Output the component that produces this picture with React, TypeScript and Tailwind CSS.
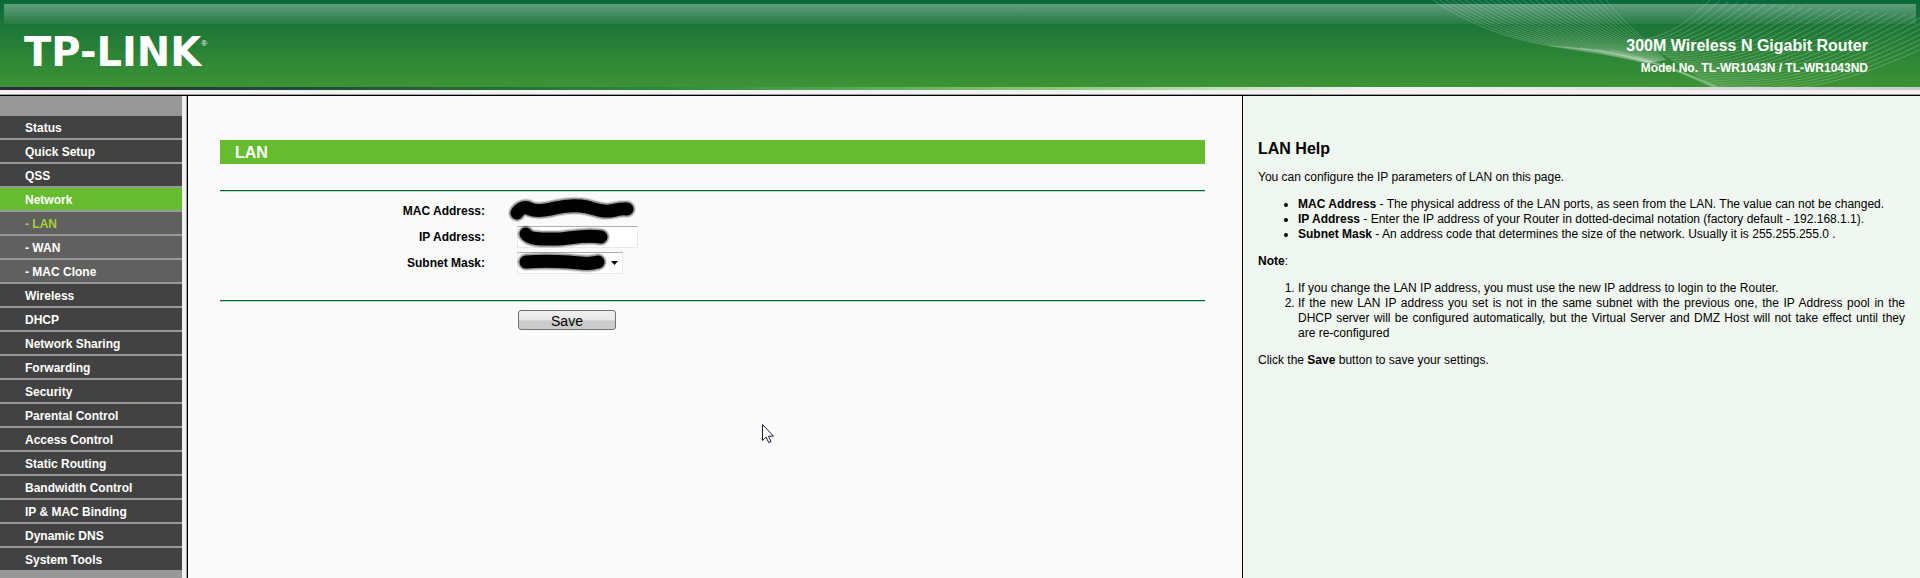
import React from "react";

interface MenuItem {
  label: string;
  sub?: boolean;
  open?: boolean;
  active?: boolean;
}

const menu: MenuItem[] = [
  { label: "Status" },
  { label: "Quick Setup" },
  { label: "QSS" },
  { label: "Network", open: true },
  { label: "- LAN", sub: true, active: true },
  { label: "- WAN", sub: true },
  { label: "- MAC Clone", sub: true },
  { label: "Wireless" },
  { label: "DHCP" },
  { label: "Network Sharing" },
  { label: "Forwarding" },
  { label: "Security" },
  { label: "Parental Control" },
  { label: "Access Control" },
  { label: "Static Routing" },
  { label: "Bandwidth Control" },
  { label: "IP & MAC Binding" },
  { label: "Dynamic DNS" },
  { label: "System Tools" },
];

const getItemStyle = (item: MenuItem) => {
  if (item.open) return "bg-[#66bb2f] text-white";
  if (item.active) return "bg-[#606060] text-[#a5d12f]";
  if (item.sub) return "bg-[#606060] text-white";
  return "bg-[#424242] text-white";
};

// evenly spread strands between two guide curves
const strands = (from: number[], to: number[], count: number) =>
  Array.from({ length: count }, (_, i) => {
    const t = i / (count - 1);
    const p = from.map((v, k) => Math.round((v + (to[k] - v) * t) * 10) / 10);
    return `M${p[0]} ${p[1]}C${p[2]} ${p[3]} ${p[4]} ${p[5]} ${p[6]} ${p[7]}`;
  });

const leftMesh = strands(
  [33, 0, 110, 52, 170, 44, 246, 63],
  [206, 0, 222, 20, 240, 36, 266, 60],
  28
);
const rightMesh = strands(
  [310, 0, 290, 20, 270, 36, 240, 40],
  [580, 20, 480, 72, 410, 100, 314, 87],
  30
);
const tail = strands(
  [150, 46, 220, 52, 262, 62, 314, 88],
  [210, 50, 250, 58, 285, 72, 320, 88],
  5
);

const Waves = () => (
  <svg
    className="absolute right-0 top-0 h-[87px] w-[520px]"
    viewBox="0 0 520 87"
    fill="none"
    stroke="#ffffff"
    strokeWidth="0.9"
    aria-hidden="true"
  >
    {[...leftMesh, ...rightMesh, ...tail].map((d) => (
      <path key={d} d={d} strokeOpacity="0.24" />
    ))}
  </svg>
);

const Header = () => (
  <header className="relative h-[87px] bg-linear-to-b from-[#08693a] via-[#217a37] via-40% to-[#3d9435]">
    <div className="absolute inset-x-1 top-1 h-5 bg-linear-to-b from-white/35 to-white/5" />
    <Waves />
    <div className="relative flex items-start justify-between pl-6 pr-[52px] text-white">
      <div className="flex pt-8">
        <span className="font-['DejaVu_Sans',sans-serif] text-[40px] leading-10 font-bold">
          TP-LINK
        </span>
        <span className="pt-2 text-[8px] leading-2">®</span>
      </div>
      <div className="pt-[34px] text-right font-bold">
        <h1 className="text-base leading-6">300M Wireless N Gigabit Router</h1>
        <p className="text-xs leading-5">Model No. TL-WR1043N / TL-WR1043ND</p>
      </div>
    </div>
  </header>
);

const Sidebar = () => (
  <nav className="w-[182px] shrink-0 bg-[#989898] pt-5">
    <ul className="flex flex-col gap-0.5">
      {menu.map((item) => (
        <li key={item.label}>
          <a
            href="#"
            className={`block h-[22px] pl-[25px] text-xs leading-6 font-bold ${getItemStyle(item)}`}
          >
            {item.label}
          </a>
        </li>
      ))}
    </ul>
  </nav>
);

// marker stroke hiding a value, with a soft edge
const Scribble = ({ d }: { d: string }) => (
  <svg
    className="pointer-events-none absolute -left-2 -top-1 h-7 w-[136px] overflow-visible"
    viewBox="0 0 136 28"
    fill="none"
    stroke="#000000"
    strokeLinecap="round"
    strokeLinejoin="round"
    aria-hidden="true"
  >
    <path d={d} strokeWidth="18" opacity="0.12" />
    <path d={d} strokeWidth="16" opacity="0.3" />
    <path d={d} strokeWidth="13" />
  </svg>
);

const Row = ({
  label,
  id,
  children,
}: {
  label: string;
  id?: string;
  children: React.ReactNode;
}) => (
  <div className="flex h-[26px] items-center">
    {id ? (
      <label
        htmlFor={id}
        className="w-[265px] shrink-0 text-right text-xs font-bold"
      >
        {label}
      </label>
    ) : (
      <span className="w-[265px] shrink-0 text-right text-xs font-bold">
        {label}
      </span>
    )}
    <div className="relative ml-8 h-[22px]">{children}</div>
  </div>
);

const Rule = () => (
  <hr className="h-0.5 border-0 border-t border-[#006838] bg-[#b5dcc4]" />
);

const LanForm = () => (
  <form className="pl-8 pr-[37px] pt-11" onSubmit={(e) => e.preventDefault()}>
    <h2 className="h-6 bg-[#66bb2f] pl-[15px] text-base leading-[26px] font-bold text-white">
      LAN
    </h2>
    <div className="mt-[26px]">
      <Rule />
      <div className="pb-6 pt-1.5">
        <Row label="MAC Address:">
          <Scribble d="M8 17C11 12 17 10 21 13C28 16 38 14 46 12S62 9 72 10S86 14 95 15S108 12 118 13" />
        </Row>
        <Row label="IP Address:" id="ip">
          <input
            id="ip"
            type="text"
            className="block h-[22px] w-[121px] border border-[#e3e9ef] border-t-[#abadb3] bg-white px-1 text-xs"
          />
          <Scribble d="M17 12C21 18 36 17 48 17S74 12 92 15" />
        </Row>
        <Row label="Subnet Mask:" id="mask">
          <select
            id="mask"
            className="block h-[22px] w-[106px] appearance-none border border-[#e3e9ef] border-t-[#abadb3] bg-white px-1 text-xs"
          />
          <svg
            className="pointer-events-none absolute left-[94px] top-[9px] h-1 w-[7px]"
            viewBox="0 0 7 4"
            aria-hidden="true"
          >
            <path d="M0 0h7L3.5 4z" />
          </svg>
          <Scribble d="M17 14C30 13 44 13 60 14S78 17 89 14" />
        </Row>
      </div>
      <Rule />
    </div>
    <button
      type="submit"
      className="ml-[298px] mt-2 block h-5 w-[98px] rounded-[3px] border border-[#707070] bg-linear-to-b from-[#f0f0f0] via-[#e6e6e6] via-50% to-[#cbcbcb] to-55% pt-0.5 text-sm leading-4"
    >
      Save
    </button>
  </form>
);

const Help = () => (
  <aside className="flex w-[677px] shrink-0 flex-col gap-3 bg-[#f0f7f0] px-[15px] pt-11 text-justify text-xs leading-[15px]">
    <h2 className="text-base leading-[18px] font-bold">LAN Help</h2>
    <p>You can configure the IP parameters of LAN on this page.</p>
    <ul className="list-disc pl-10">
      <li>
        <b>MAC Address</b> - The physical address of the LAN ports, as seen from
        the LAN. The value can not be changed.
      </li>
      <li>
        <b>IP Address</b> - Enter the IP address of your Router in
        dotted-decimal notation (factory default - 192.168.1.1).
      </li>
      <li>
        <b>Subnet Mask</b> - An address code that determines the size of the
        network. Usually it is 255.255.255.0 .
      </li>
    </ul>
    <p>
      <b>Note</b>:
    </p>
    <ol className="list-decimal pl-10">
      <li>
        If you change the LAN IP address, you must use the new IP address to
        login to the Router.
      </li>
      <li>
        If the new LAN IP address you set is not in the same subnet with the
        previous one, the IP Address pool in the DHCP server will be configured
        automatically, but the Virtual Server and DMZ Host will not take effect
        until they are re-configured
      </li>
    </ol>
    <p>
      Click the <b>Save</b> button to save your settings.
    </p>
  </aside>
);

const Cursor = () => (
  <svg
    className="pointer-events-none absolute left-[574px] top-[328px] h-5 w-3"
    viewBox="0 0 12 20"
    aria-hidden="true"
  >
    <path
      d="M.5.5v16l3.600-3.500 2.600 5.600 2.300-1-2.500-5.400h5z"
      fill="#ffffff"
      stroke="#1b1b3a"
    />
  </svg>
);

export default function App() {
  return (
    <div className="flex min-h-screen flex-col bg-white font-['Liberation_Sans',Arial,sans-serif] text-black">
      <Header />
      <div className="h-[3px] bg-[linear-gradient(to_right,#33283a,#1f4a38_15%,#2f8a3a_35%,#8cc97a_55%,#f4f4f4_72%,#cccccc)]" />
      <div className="h-[5px] border-b border-[#a0a0a0] bg-[#f2f2f2]" />
      <div className="flex grow border-t border-black">
        <Sidebar />
        <div className="w-[5px] shrink-0 border-r border-[#a0a0a0] bg-[#f0f0f0]" />
        <main className="relative grow border-x border-black bg-[#fafafa]">
          <LanForm />
          <Cursor />
        </main>
        <Help />
      </div>
    </div>
  );
}
